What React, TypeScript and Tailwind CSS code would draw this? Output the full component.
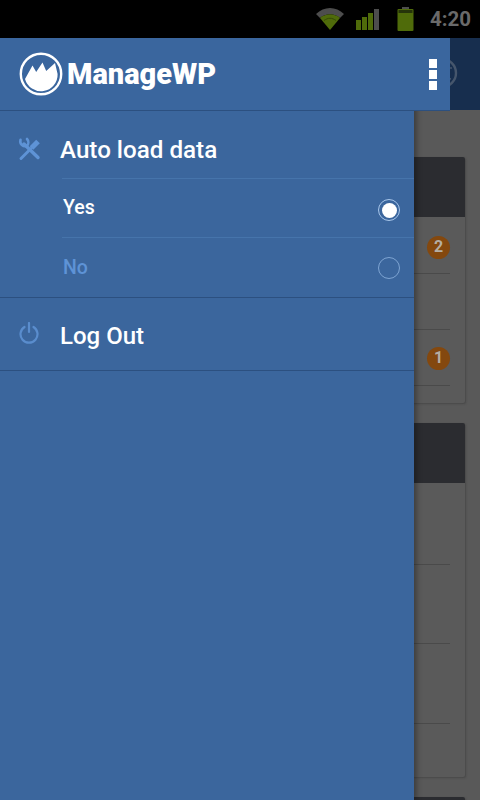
const Row = ({ h, line = true, badge, badgeClass = "" }: { h: string; line?: boolean; badge?: string; badgeClass?: string }) => (
  <div className={`${h} flex items-center justify-end ${line ? "border-b border-[#4a4a4a] mr-[15px]" : ""}`}>
    {badge && (
      <span className={`${badgeClass} w-[23px] h-[23px] rounded-full bg-[#84480e] text-[#b5aea4] text-[16px] font-bold flex items-center justify-center`}>
        {badge}
      </span>
    )}
  </div>
);

const Card = ({ children }: { children: React.ReactNode }) => (
  <div className="mr-[15px] rounded-[2px] bg-[#5a5a5a] shadow-[1px_1px_2px_#484848] overflow-hidden">
    <div className="h-[60px] bg-[#2b2c30]" />
    {children}
  </div>
);

const Logo = () => (
  <svg width="44" height="44" viewBox="0 0 44 44" className="shrink-0">
    <circle cx="22" cy="22" r="20.2" fill="none" stroke="#fff" strokeWidth="2.4" />
    <path d="M6 27 L13.5 13.5 L17.2 20 L23.5 10.5 L27.2 19 L36 11 L38.6 22 A16.6 16.6 0 0 1 6 27 Z" fill="#fff" />
  </svg>
);

export default function App() {
  return (
    <div className="relative w-[480px] h-[800px] overflow-hidden bg-[#595959] font-['Roboto',sans-serif]">
      <div className="h-[38px] bg-black flex items-center justify-end">
        <svg width="30" height="24" viewBox="0 0 30 24" className="mr-[11px]">
          <path d="M1 7 C9 -1 21 -1 29 7 L25 11 C19 6 11 6 5 11 Z" fill="#4d4d4d" />
          <path d="M5 11 C11 6 19 6 25 11 L15 23 Z" fill="#4f6b0a" />
          <path d="M9 13.5 C13 10.5 17 10.5 21 13.5" stroke="#354808" strokeWidth="1" fill="none" />
        </svg>
        <svg width="24" height="22" viewBox="0 0 24 22" className="mr-[17px]">
          <rect x="0" y="12" width="5" height="10" fill="#4f6b0a" />
          <rect x="6" y="9" width="5" height="13" fill="#4f6b0a" />
          <rect x="12" y="5" width="5" height="17" fill="#4f6b0a" />
          <rect x="18" y="1" width="5" height="21" fill="#4d4d4d" />
        </svg>
        <svg width="17" height="24" viewBox="0 0 17 24" className="mr-[16px]">
          <rect x="5" y="0" width="7" height="3" fill="#4d4d4d" />
          <rect x="0.5" y="2" width="16" height="22" rx="1" fill="#4f6b0a" />
          <rect x="1.5" y="3" width="14" height="3" fill="#26340a" />
        </svg>
        <span className="mr-[9px] text-[20.5px] font-bold leading-none text-[#6a6a6a]">4:20</span>
      </div>

      <div className="h-[72px] bg-[#172e4e] flex items-center justify-end">
        <svg width="40" height="40" viewBox="0 0 40 40" className="mr-[18px] mt-[2px]">
          <circle cx="20" cy="18" r="14" fill="none" stroke="#46566c" strokeWidth="2.4" />
          <path d="M24 13 H30 M22 18 H28 M24 23 L29 24" stroke="#46566c" strokeWidth="1.6" fill="none" />
        </svg>
      </div>

      <div className="pt-[47px] flex flex-col gap-[20px]">
        <Card>
          <Row h="h-[57px]" badge="2" badgeClass="mt-[4px]" />
          <Row h="h-[56px]" />
          <Row h="h-[56px]" badge="1" badgeClass="mt-[1px]" />
          <Row h="h-[17px]" line={false} />
        </Card>
        <Card>
          <Row h="h-[82px]" />
          <Row h="h-[79px]" />
          <Row h="h-[80px]" />
          <Row h="h-[53px]" line={false} />
        </Card>
        <Card>
          <div />
        </Card>
      </div>

      <div className="absolute left-0 top-[38px] bottom-0 w-[414px] bg-[#3b669d] shadow-[3px_0_5px_rgba(0,0,0,0.3)]">
        <div className="h-[73px]" />
        <div className="h-[187px] border-b border-[#2c5080] flex flex-col">
          <div className="h-[67px] flex items-center pl-[18px]">
            <svg width="24" height="24" viewBox="0 0 24 24" className="mr-[18px] mt-[8px] shrink-0" fill="none" stroke="#5e93d6" strokeLinecap="round">
              <path d="M6 7 L20 20.5" strokeWidth="3.4" />
              <path d="M2.5 2.8 A5 5 0 0 0 8.8 9 M9 2 A5 5 0 0 1 8.8 9" strokeWidth="2.6" />
              <path d="M3 21.5 L13 11.5" strokeWidth="3" />
              <path d="M13.5 11 L20 4.5" strokeWidth="5.2" strokeLinecap="butt" />
            </svg>
            <span className="mt-[12px] text-[24.2px] font-medium leading-none text-white">Auto load data</span>
          </div>
          <div className="ml-[62px] h-[59px] border-t border-[#4674ab] flex items-center justify-between pr-[14px]">
            <span className="ml-[1px] mt-[-1px] text-[19.5px] font-medium leading-none text-white">Yes</span>
            <span className="w-[22px] h-[22px] rounded-full border border-[#a8c6ea] flex items-center justify-center mt-[4px]">
              <span className="w-[15px] h-[15px] rounded-full bg-white" />
            </span>
          </div>
          <div className="ml-[62px] flex-1 border-t border-[#4674ab] flex items-center justify-between pr-[14px]">
            <span className="ml-[1px] text-[19.5px] font-medium leading-none text-[#5e93d6]">No</span>
            <span className="w-[22px] h-[22px] rounded-full border border-[#7ea4d2]" />
          </div>
        </div>
        <div className="h-[73px] border-b border-[#2c5080] flex items-center pl-[19px]">
          <svg width="20" height="22" viewBox="0 0 20 22" className="mr-[21px] mt-[-2px]" fill="none" stroke="#5a8dcd" strokeWidth="2.2" strokeLinecap="round">
            <path d="M10 1 V10" />
            <path d="M5.5 5 A8.5 8.5 0 1 0 14.5 5" />
          </svg>
          <span className="mt-[4px] text-[24px] font-medium leading-none text-white">Log Out</span>
        </div>
      </div>

      <div className="absolute left-0 top-[38px] w-[450px] h-[73px] bg-[#3a669e] border-b border-[#2c5080] flex items-center justify-between pl-[19px] pr-[13px]">
        <div className="flex items-center gap-[4px]">
          <Logo />
          <span className="mt-[1px] text-[29px] font-black leading-none text-white">ManageWP</span>
        </div>
        <div className="flex flex-col gap-[2px]">
          <span className="w-[8px] h-[9px] bg-white" />
          <span className="w-[8px] h-[9px] bg-white" />
          <span className="w-[8px] h-[9px] bg-white" />
        </div>
      </div>
    </div>
  );
}
